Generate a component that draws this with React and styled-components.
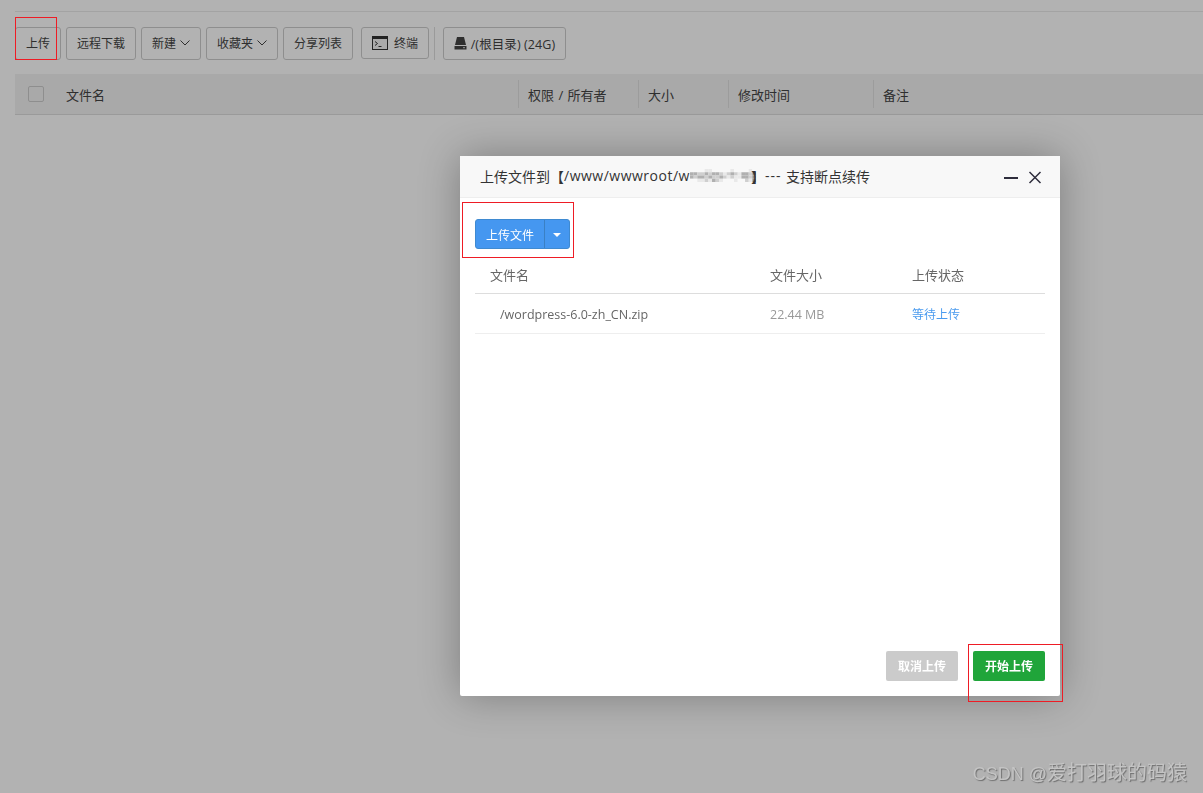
import React from 'react';
import styled, { createGlobalStyle } from 'styled-components';

const GlobalStyle = createGlobalStyle`
  html, body {
    margin: 0;
    height: 100%;
    background: #fff;
    font-family: "Open Sans", "Noto Sans CJK SC", sans-serif;
    overflow: hidden;
  }
  * { box-sizing: border-box; }
`;

const Page = styled.div`
  height: 793px;
  padding: 11px 0 0 15px;
`;

const TopLine = styled.div`
  height: 1px;
  background: #eaeaea;
`;

const Toolbar = styled.div`
  display: flex;
  align-items: flex-start;
  gap: 5px;
  margin-top: 15px;
  height: 33px;
`;

const ToolButton = styled.div`
  display: flex;
  align-items: center;
  justify-content: center;
  gap: ${(p) => p.$gap || 0}px;
  width: ${(p) => p.$w}px;
  height: ${(p) => p.$h || 33}px;
  padding-bottom: 1px;
  border: 1px solid #ccc;
  border-radius: 3px;
  background: #fff;
  color: #444;
  font-size: 12px;
  white-space: nowrap;
`;

const TerminalButton = styled(ToolButton)`
  margin-left: 3px;
`;

const ToolDivider = styled.div`
  width: 1px;
  height: 33px;
  background: #ddd;
  margin-right: 3px;
`;

const DriveLabel = styled.span`
  font-size: 12.5px;
  letter-spacing: 0.1px;
`;

const TableHead = styled.div`
  display: flex;
  align-items: center;
  height: 41px;
  margin-top: 14px;
  background: #f2f2f2;
  border-bottom: 1px solid #ddd;
  color: #444;
  font-size: 13px;
`;

const Checkbox = styled.div`
  width: 16px;
  height: 16px;
  margin-left: 13px;
  margin-right: 22px;
  border: 1px solid #ccc;
  border-radius: 2px;
  background: #f2f2f2;
`;

const HeadCell = styled.div`
  display: flex;
  align-items: center;
  width: ${(p) => p.$w}px;
  height: 28px;
  padding-top: 1px;
  padding-left: ${(p) => (p.$first ? 0 : 9)}px;
  border-left: ${(p) => (p.$first ? 'none' : '1px solid #e0e0e0')};
  white-space: pre;
  word-spacing: 1px;
`;

const Backdrop = styled.div`
  position: fixed;
  inset: 0;
  background: rgba(0, 0, 0, 0.3);
`;

const Modal = styled.div`
  position: absolute;
  left: 460px;
  top: 156px;
  width: 600px;
  height: 540px;
  display: flex;
  flex-direction: column;
  background: #fff;
  border-radius: 2px;
  box-shadow: 0 0 40px rgba(0, 0, 0, 0.3);
`;

const ModalTitle = styled.div`
  display: flex;
  align-items: center;
  height: 42px;
  padding: 0 18px 2px 20px;
  background: #f8f8f8;
  border-bottom: 1px solid #eee;
  color: #333;
  font-size: 14px;
  white-space: pre;
`;

const TitlePath = styled.span`
  letter-spacing: 0.5px;
`;

const TitleDashes = styled.span`
  letter-spacing: 1px;
`;

const MosaicWrap = styled.svg`
  margin-right: -5px;
`;

const TitleActions = styled.div`
  display: flex;
  align-items: center;
  gap: 10px;
  margin-left: auto;
  padding-top: 2px;
  color: #2e2d3c;
`;

const ModalBody = styled.div`
  flex: 1;
  padding: 21px 15px 0;
`;

const SplitButton = styled.div`
  display: flex;
  width: 95px;
  height: 30px;
  border: 1px solid #3f8ad1;
  border-radius: 3px;
  background: #4597f0;
  color: #fff;
  font-size: 12px;
`;

const SplitLabel = styled.div`
  display: flex;
  align-items: center;
  justify-content: center;
  width: 69px;
  padding-top: 1px;
  border-right: 1px solid #3a80c4;
`;

const SplitCaret = styled.div`
  flex: 1;
  display: flex;
  align-items: center;
  justify-content: center;
  &::after {
    content: '';
    border-top: 4px solid #fff;
    border-left: 4px solid transparent;
    border-right: 4px solid transparent;
    margin-top: 1px;
  }
`;

const Row = styled.div`
  display: grid;
  grid-template-columns: 295px 142px 1fr;
  align-items: center;
  margin-top: ${(p) => p.$top || 0}px;
  height: ${(p) => p.$h}px;
  padding: ${(p) => p.$pad || '0'};
  border-bottom: 1px solid ${(p) => p.$line};
  font-size: ${(p) => p.$size}px;
`;

const Cell = styled.div`
  padding-left: ${(p) => p.$pad || 0}px;
  color: ${(p) => p.$color || '#666'};
`;

const StatusCell = styled(Cell)`
  font-size: 12px;
`;

const ModalFooter = styled.div`
  display: flex;
  justify-content: flex-end;
  gap: 15px;
  padding: 0 15px 15px;
`;

const FooterButton = styled.div`
  display: flex;
  align-items: center;
  justify-content: center;
  width: 72px;
  height: 30px;
  border-radius: 2px;
  background: ${(p) => p.$bg};
  color: #fff;
  font-size: 12px;
  font-weight: 700;
`;

const RedBox = styled.div`
  position: absolute;
  left: ${(p) => p.$x}px;
  top: ${(p) => p.$y}px;
  width: ${(p) => p.$w}px;
  height: ${(p) => p.$h}px;
  border: 1px solid #ee1c25;
`;

const Watermark = styled.div`
  position: absolute;
  right: 16px;
  bottom: 6px;
  color: #c4c4c4;
  font-family: "Liberation Sans", "Noto Sans CJK SC", sans-serif;
  font-size: 20px;
  line-height: 26px;
  text-shadow: 1px 1px 1px #6e6e6e;
  white-space: pre;
`;

const WatermarkLatin = styled.span`
  font-size: 18px;
`;

const MOSAIC = [
  '    ..     .    . ',
  '##++#+##+.+#+.##+@',
  '#+##+#++#+.+..##+@',
  '  ..+.#+.   .  +.@',
];

const MOSAIC_SHADES = { '@': '#8f8f8f', '#': '#b0b0b0', '+': '#cfcfcf', '.': '#e9e9e9', ' ': '#f8f8f8' };

const TerminalIcon = () => (
  <svg width="16" height="14" viewBox="0 0 16 14">
    <rect x="0.5" y="0.5" width="15" height="13" fill="#f4f4f4" stroke="#333" />
    <rect x="0.5" y="0.5" width="15" height="2.5" fill="#333" />
    <path d="M3 5.5l2.5 2-2.5 2M6.5 10.5h3" fill="none" stroke="#333" />
  </svg>
);

const DiskIcon = () => (
  <svg width="13" height="13" viewBox="0 0 13 13">
    <path d="M3 0h7l2 8H1z" fill="#444" />
    <path d="M1 9h11.500v3.500H0.500V9z" fill="#444" />
    <rect x="9" y="10.200" width="2" height="1" fill="#ddd" />
  </svg>
);

const Chevron = () => (
  <svg width="10" height="6" viewBox="0 0 10 6">
    <path d="M0.500 0.500L5 5l4.500-4.500" fill="none" stroke="#444" />
  </svg>
);

const Mosaic = () => (
  <MosaicWrap width="66" height="13" viewBox="0 0 66 13">
    {MOSAIC.map((line, y) =>
      line.split('').map((c, x) => (
        <rect
          key={`${x}-${y}`}
          x={x * 3.67}
          y={y * 3.25}
          width="3.67"
          height="3.25"
          fill={MOSAIC_SHADES[c]}
        />
      ))
    )}
  </MosaicWrap>
);

const App = () => (
  <>
    <GlobalStyle />
    <Page>
      <TopLine />
      <Toolbar>
        <ToolButton $w={46}>上传</ToolButton>
        <ToolButton $w={70}>远程下载</ToolButton>
        <ToolButton $w={60} $gap={4}>新建<Chevron /></ToolButton>
        <ToolButton $w={72} $gap={4}>收藏夹<Chevron /></ToolButton>
        <ToolButton $w={70}>分享列表</ToolButton>
        <TerminalButton $w={68} $h={32} $gap={6}><TerminalIcon />终端</TerminalButton>
        <ToolDivider />
        <ToolButton $w={123} $gap={4}><DiskIcon /><DriveLabel>/(根目录) (24G)</DriveLabel></ToolButton>
      </Toolbar>
      <TableHead>
        <Checkbox />
        <HeadCell $first $w={452}>文件名</HeadCell>
        <HeadCell $w={120}>权限 / 所有者</HeadCell>
        <HeadCell $w={90}>大小</HeadCell>
        <HeadCell $w={145}>修改时间</HeadCell>
        <HeadCell $w={200}>备注</HeadCell>
      </TableHead>
    </Page>
    <Backdrop />
    <Modal>
      <ModalTitle>
        上传文件到【<TitlePath>/www/wwwroot/w</TitlePath>
        <Mosaic />
        】<TitleDashes>--- </TitleDashes>支持断点续传
        <TitleActions>
          <svg width="14" height="14" viewBox="0 0 14 14">
            <rect x="0" y="7" width="14" height="2" fill="currentColor" />
          </svg>
          <svg width="14" height="14" viewBox="0 0 14 14">
            <path d="M1.500 2l11 11M12.500 2l-11 11" stroke="currentColor" strokeWidth="1.500" />
          </svg>
        </TitleActions>
      </ModalTitle>
      <ModalBody>
        <SplitButton>
          <SplitLabel>上传文件</SplitLabel>
          <SplitCaret />
        </SplitButton>
        <Row $top={10} $h={35} $pad="0 0 3px" $size={13} $line="#ddd">
          <Cell $pad={15}>文件名</Cell>
          <Cell>文件大小</Cell>
          <Cell>上传状态</Cell>
        </Row>
        <Row $h={40} $pad="1px 0 0" $size={12.5} $line="#eee">
          <Cell $pad={25}>/wordpress-6.0-zh_CN.zip</Cell>
          <Cell $color="#999">22.44 MB</Cell>
          <StatusCell $color="#4a9bef">等待上传</StatusCell>
        </Row>
      </ModalBody>
      <ModalFooter>
        <FooterButton $bg="#cbcbcb">取消上传</FooterButton>
        <FooterButton $bg="#20a53a">开始上传</FooterButton>
      </ModalFooter>
    </Modal>
    <RedBox $x={15} $y={17} $w={42} $h={43} />
    <RedBox $x={462} $y={202} $w={112} $h={56} />
    <RedBox $x={968} $y={644} $w={95} $h={58} />
    <Watermark><WatermarkLatin>CSDN @</WatermarkLatin>爱打羽球的码猿</Watermark>
  </>
);

export default App;
